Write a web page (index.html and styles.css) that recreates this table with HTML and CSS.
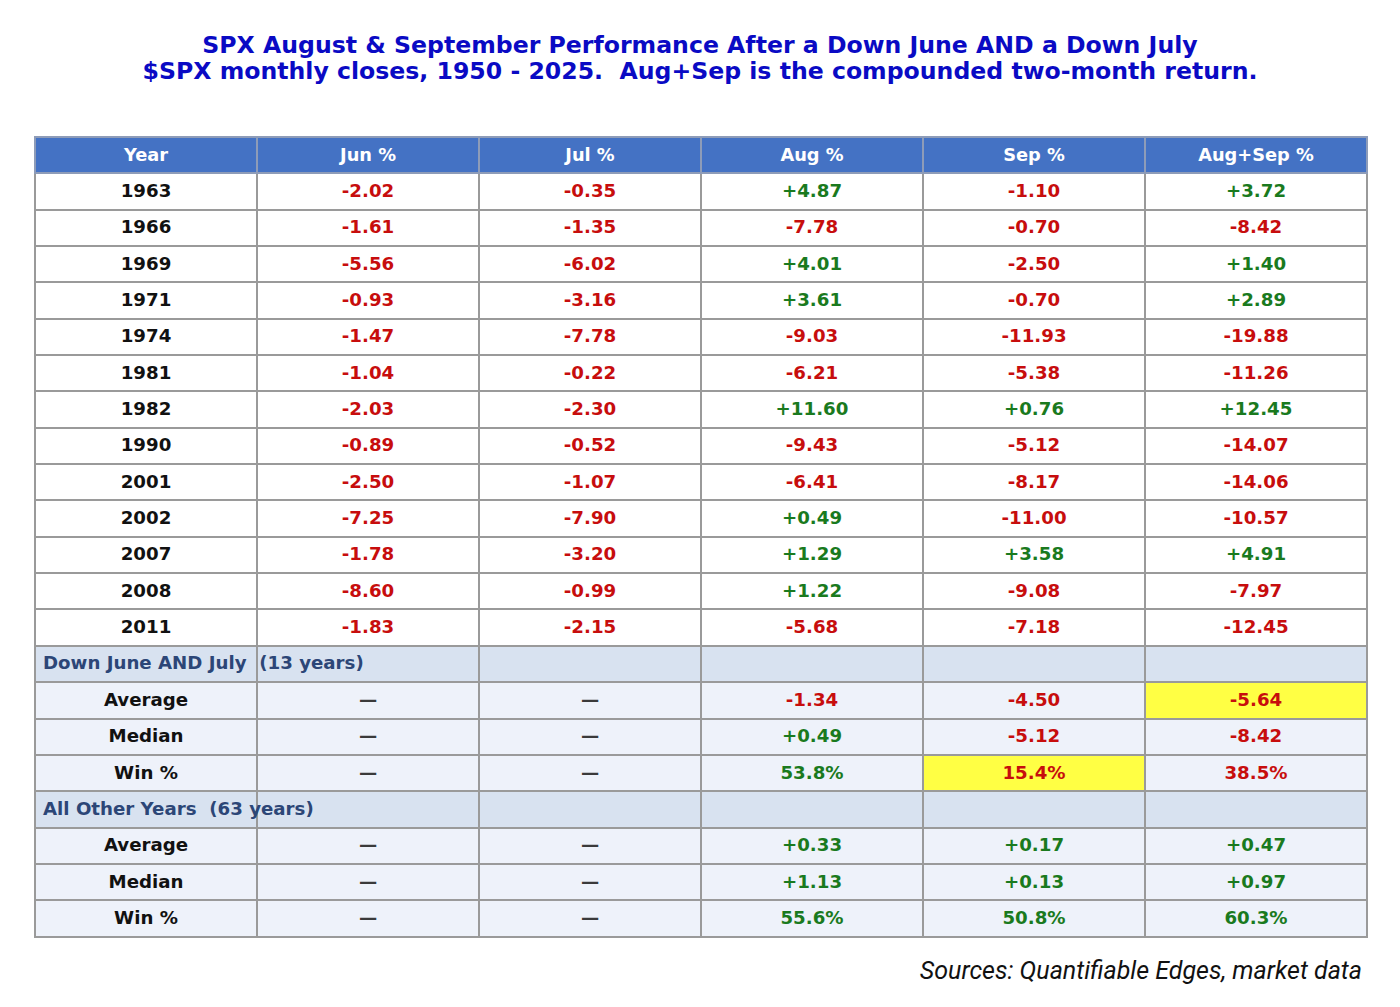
FILE: index.html
```html
<!DOCTYPE html>
<html>
<head>
<meta charset="utf-8">
<link rel="stylesheet" href="styles.css">
</head>
<body>
<div class="page">
  <h1 class="title">
    <span class="line">SPX August &amp; September Performance After a Down June AND a Down July</span>
    <span class="line">$SPX monthly closes, 1950 - 2025.&nbsp; Aug+Sep is the compounded two-month return.</span>
  </h1>
  <table class="perf">
    <thead>
      <tr><th>Year</th><th>Jun %</th><th>Jul %</th><th>Aug %</th><th>Sep %</th><th>Aug+Sep %</th></tr>
    </thead>
    <tbody>
      <tr><td>1963</td><td class="neg">-2.02</td><td class="neg">-0.35</td><td class="pos">+4.87</td><td class="neg">-1.10</td><td class="pos">+3.72</td></tr>
      <tr><td>1966</td><td class="neg">-1.61</td><td class="neg">-1.35</td><td class="neg">-7.78</td><td class="neg">-0.70</td><td class="neg">-8.42</td></tr>
      <tr><td>1969</td><td class="neg">-5.56</td><td class="neg">-6.02</td><td class="pos">+4.01</td><td class="neg">-2.50</td><td class="pos">+1.40</td></tr>
      <tr><td>1971</td><td class="neg">-0.93</td><td class="neg">-3.16</td><td class="pos">+3.61</td><td class="neg">-0.70</td><td class="pos">+2.89</td></tr>
      <tr><td>1974</td><td class="neg">-1.47</td><td class="neg">-7.78</td><td class="neg">-9.03</td><td class="neg">-11.93</td><td class="neg">-19.88</td></tr>
      <tr><td>1981</td><td class="neg">-1.04</td><td class="neg">-0.22</td><td class="neg">-6.21</td><td class="neg">-5.38</td><td class="neg">-11.26</td></tr>
      <tr><td>1982</td><td class="neg">-2.03</td><td class="neg">-2.30</td><td class="pos">+11.60</td><td class="pos">+0.76</td><td class="pos">+12.45</td></tr>
      <tr><td>1990</td><td class="neg">-0.89</td><td class="neg">-0.52</td><td class="neg">-9.43</td><td class="neg">-5.12</td><td class="neg">-14.07</td></tr>
      <tr><td>2001</td><td class="neg">-2.50</td><td class="neg">-1.07</td><td class="neg">-6.41</td><td class="neg">-8.17</td><td class="neg">-14.06</td></tr>
      <tr><td>2002</td><td class="neg">-7.25</td><td class="neg">-7.90</td><td class="pos">+0.49</td><td class="neg">-11.00</td><td class="neg">-10.57</td></tr>
      <tr><td>2007</td><td class="neg">-1.78</td><td class="neg">-3.20</td><td class="pos">+1.29</td><td class="pos">+3.58</td><td class="pos">+4.91</td></tr>
      <tr><td>2008</td><td class="neg">-8.60</td><td class="neg">-0.99</td><td class="pos">+1.22</td><td class="neg">-9.08</td><td class="neg">-7.97</td></tr>
      <tr><td>2011</td><td class="neg">-1.83</td><td class="neg">-2.15</td><td class="neg">-5.68</td><td class="neg">-7.18</td><td class="neg">-12.45</td></tr>
      <tr class="group"><td class="glabel"><span>Down June AND July&nbsp; (13 years)</span></td><td></td><td></td><td></td><td></td><td></td></tr>
      <tr class="stat"><td>Average</td><td class="dash">—</td><td class="dash">—</td><td class="neg">-1.34</td><td class="neg">-4.50</td><td class="neg hl">-5.64</td></tr>
      <tr class="stat"><td>Median</td><td class="dash">—</td><td class="dash">—</td><td class="pos">+0.49</td><td class="neg">-5.12</td><td class="neg">-8.42</td></tr>
      <tr class="stat"><td>Win %</td><td class="dash">—</td><td class="dash">—</td><td class="pos">53.8%</td><td class="neg hl">15.4%</td><td class="neg">38.5%</td></tr>
      <tr class="group"><td class="glabel"><span>All Other Years&nbsp; (63 years)</span></td><td></td><td></td><td></td><td></td><td></td></tr>
      <tr class="stat"><td>Average</td><td class="dash">—</td><td class="dash">—</td><td class="pos">+0.33</td><td class="pos">+0.17</td><td class="pos">+0.47</td></tr>
      <tr class="stat"><td>Median</td><td class="dash">—</td><td class="dash">—</td><td class="pos">+1.13</td><td class="pos">+0.13</td><td class="pos">+0.97</td></tr>
      <tr class="stat"><td>Win %</td><td class="dash">—</td><td class="dash">—</td><td class="pos">55.6%</td><td class="pos">50.8%</td><td class="pos">60.3%</td></tr>
    </tbody>
  </table>
  <p class="source">Sources: Quantifiable Edges, market data</p>
</div>
</body>
</html>
```

FILE: styles.css
```css
html, body {
  margin: 0;
  padding: 0;
  background: #ffffff;
}

.page {
  width: 1400px;
  padding-top: 32px;
}

.title {
  margin: 0;
  text-align: center;
  font-family: "DejaVu Sans", sans-serif;
  font-weight: bold;
  font-size: 23.6px;
  line-height: 26px;
  color: #0a0ac4;
}

.title .line {
  display: block;
}

.perf {
  margin: 52px 0 0 34px;
  width: 1334px;
  table-layout: fixed;
  border-collapse: collapse;
  font-family: "DejaVu Sans", sans-serif;
  font-weight: bold;
  font-size: 18.2px;
}

.perf tr {
  height: 36.35px;
}

.perf th,
.perf td {
  border: 2px solid #9a9a9a;
  padding: 0 0 2px 0;
  text-align: center;
  vertical-align: middle;
  color: #111;
  white-space: nowrap;
}

.perf th {
  background: #4472c4;
  color: #ffffff;
  font-size: 17.8px;
  border-color: #8e9cb8;
}

.perf td.neg {
  color: #c70d0d;
}

.perf td.pos {
  color: #1a7a1e;
}

.perf td.dash {
  color: #3a3a3a;
}

.perf tr.stat td {
  background: #eef2fa;
}

.perf tr.group td {
  background: #d8e2f0;
}

.perf td.glabel {
  text-align: left;
  overflow: visible;
  padding-left: 7px;
  color: #2c4677;
}

.perf td.glabel span {
  position: relative;
  z-index: 1;
}

.perf tr.stat td.hl {
  background: #ffff44;
}

.source {
  margin: 20px 38px 0 0;
  text-align: right;
  font-family: Roboto, "Liberation Sans", sans-serif;
  font-style: italic;
  font-size: 25px;
  line-height: 26px;
  color: #111;
}
```
